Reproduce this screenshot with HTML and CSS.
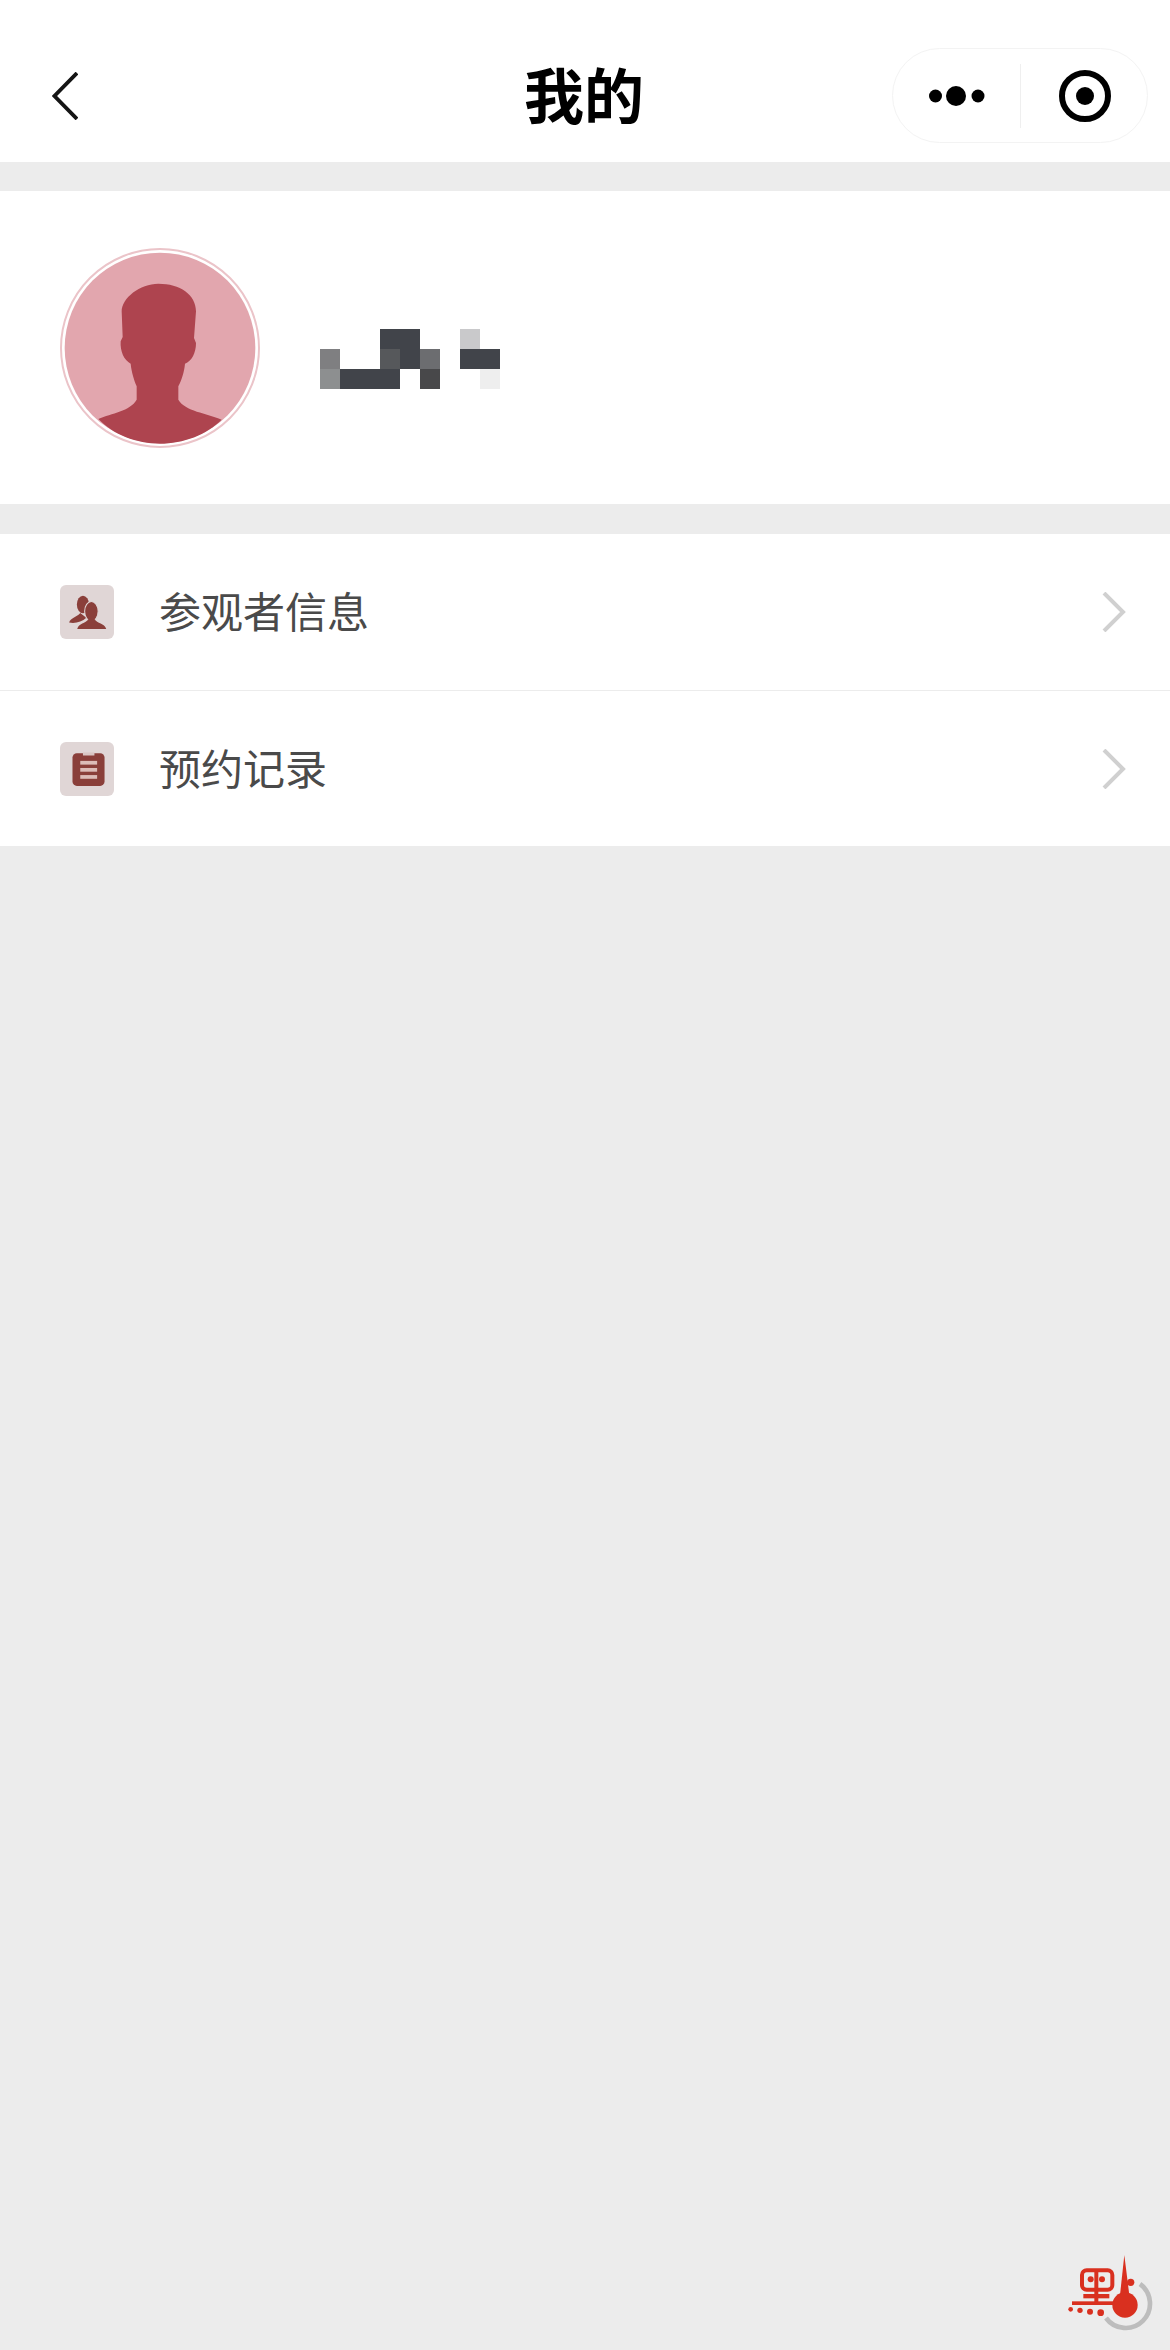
FILE: index.html
```html
<!DOCTYPE html>
<html lang="zh-CN">
<head>
<meta charset="utf-8">
<title>我的</title>
<link rel="stylesheet" href="styles.css">
</head>
<body>
<main class="page">
  <header class="navbar">
    <button class="back" aria-label="返回">
      <svg class="back-icon" viewBox="0 0 26 48"><path d="M25 1 2.5 24 25 47" fill="none" stroke="#151515" stroke-width="3.8"/></svg>
    </button>
    <h1 class="title">我的</h1>
    <div class="capsule">
      <svg class="capsule-more" viewBox="0 0 56 20"><circle cx="6.5" cy="10" r="6.5"/><circle cx="27" cy="10" r="10"/><circle cx="49" cy="10" r="6.5"/></svg>
      <span class="capsule-line"></span>
      <svg class="capsule-target" viewBox="0 0 52 52"><circle cx="26" cy="26" r="23" fill="none" stroke="#000" stroke-width="6"/><circle cx="26" cy="26" r="9"/></svg>
    </div>
  </header>

  <section class="profile">
    <svg class="avatar" viewBox="60 55 600 600">
      <circle cx="360" cy="355" r="297" fill="#fff" stroke="#ebc4c9" stroke-width="6"/>
      <circle cx="360" cy="355" r="286" fill="#e2a6ae"/>
      <path fill="#ae444f" d="M175 568C215 550 270 545 290 510L290 470C282 450 275 430 272 402 252 392 240 365 242 335L248 322 245 245C245 205 300 162 355 162 420 162 468 195 468 245L462 325 468 340C468 370 455 395 435 402 432 430 425 450 415 470L415 510C435 545 500 550 545 570 500 615 430 642 360 642 290 642 220 615 175 568Z"/>
    </svg>
    <div class="mosaic" aria-hidden="true">
      <i></i><i></i><i></i><i class="c-d"></i><i class="c-d"></i><i></i><i></i><i class="c-l"></i><i></i>
      <i class="c-g1"></i><i></i><i></i><i class="c-g2"></i><i class="c-d"></i><i class="c-g3"></i><i></i><i class="c-d"></i><i class="c-d"></i>
      <i class="c-g4"></i><i class="c-d"></i><i class="c-d"></i><i class="c-d"></i><i></i><i class="c-g5"></i><i></i><i></i><i class="c-x"></i>
    </div>
  </section>

  <nav class="menu">
    <a class="row">
      <span class="row-icon">
        <svg viewBox="60 75 160 160">
          <ellipse cx="128" cy="133" rx="18" ry="26" fill="#8a3f3a"/>
          <path fill="#8a3f3a" d="M87 186C92 172 110 170 120 158L138 172C125 184 105 190 87 186Z"/>
          <ellipse cx="153" cy="153" rx="20" ry="29" fill="#8a3f3a" stroke="#e0d6d6" stroke-width="3"/>
          <path fill="#8a3f3a" d="M111 205C116 188 135 190 145 176L162 176C170 190 192 188 197 205Z"/>
        </svg>
      </span>
      <span class="row-text">参观者信息</span>
      <svg class="chevron" viewBox="0 0 24 40"><path d="M2 1 21 20 2 39" fill="none" stroke="#d0d0d0" stroke-width="4"/></svg>
    </a>
    <a class="row">
      <span class="row-icon">
        <svg viewBox="60 547 160 160">
          <rect x="97" y="580" width="95" height="97" rx="13" fill="#8a3f3a"/>
          <rect x="128" y="578" width="34" height="9" fill="#d9c6c4"/>
          <rect x="120" y="603" width="50" height="11" fill="#dcbcb8"/>
          <rect x="120" y="624" width="50" height="11" fill="#dcbcb8"/>
          <rect x="120" y="645" width="50" height="11" fill="#dcbcb8"/>
        </svg>
      </span>
      <span class="row-text">预约记录</span>
      <svg class="chevron" viewBox="0 0 24 40"><path d="M2 1 21 20 2 39" fill="none" stroke="#d0d0d0" stroke-width="4"/></svg>
    </a>
  </nav>

  <svg class="logo" viewBox="0 0 390 360">
    <path d="M300 162A73 73 0 1 1 198 264" fill="none" stroke="#bdbdbd" stroke-width="14"/>
    <g fill="#d9301f">
      <circle cx="255" cy="225" r="38"/>
      <path d="M253 75 268 195 240 195Z"/>
      <circle cx="272" cy="157" r="11"/>
      <circle cx="92" cy="238" r="7"/>
      <circle cx="120" cy="241" r="8"/>
      <circle cx="150" cy="245" r="9"/>
      <circle cx="182" cy="248" r="10"/>
      <circle cx="152" cy="148" r="9"/>
      <circle cx="186" cy="148" r="9"/>
      <rect x="130" y="192" width="78" height="13"/>
      <rect x="96" y="214" width="128" height="11"/>
      <rect x="163" y="118" width="12" height="100"/>
    </g>
    <rect x="126" y="121" width="91" height="58" rx="14" fill="none" stroke="#d9301f" stroke-width="12"/>
  </svg>
</main>
</body>
</html>
```

FILE: styles.css
```css
* { box-sizing: border-box; }

html, body {
  margin: 0;
  padding: 0;
}

body {
  background: #ececec;
  font-family: "Noto Sans CJK SC", "Noto Sans", sans-serif;
}

.page {
  position: relative;
  min-height: 2350px;
  display: flex;
  flex-direction: column;
}

.navbar {
  height: 162px;
  padding: 48px 22px 19px 22px;
  background: #fff;
  display: grid;
  grid-template-columns: 1fr auto 1fr;
  align-items: center;
}

.back {
  width: 26px;
  height: 48px;
  margin-left: 30px;
  padding: 0;
  border: 0;
  background: none;
  display: block;
}

.back-icon {
  display: block;
  width: 26px;
  height: 48px;
}

.title {
  margin: -5px 2px 0 0;
  font-size: 60px;
  line-height: 64px;
  font-weight: 700;
  color: #000;
}

.capsule {
  justify-self: end;
  width: 256px;
  height: 95px;
  border: 1px solid #f3f3f3;
  border-radius: 48px;
  background: #fff;
  display: flex;
  align-items: center;
  padding-left: 36px;
}

.capsule-more {
  width: 56px;
  height: 20px;
  display: block;
}

.capsule-line {
  width: 1px;
  height: 64px;
  margin-left: 35px;
  background: #efefef;
}

.capsule-target {
  width: 52px;
  height: 52px;
  margin-left: 38px;
  display: block;
}

.profile {
  margin-top: 29px;
  height: 313px;
  padding-left: 60px;
  background: #fff;
  display: flex;
  align-items: center;
  gap: 60px;
}

.avatar {
  width: 200px;
  height: 200px;
  display: block;
}

.mosaic {
  margin-top: 23px;
  display: grid;
  grid-template-columns: repeat(9, 20px);
  grid-auto-rows: 20px;
}

.mosaic i { display: block; }
.c-d { background: #41444a; }
.c-l { background: #c9c9cb; }
.c-g1 { background: #7f7f81; }
.c-g2 { background: #56585b; }
.c-g3 { background: #6c6d70; }
.c-g4 { background: #8d8f90; }
.c-g5 { background: #48484a; }
.c-x { background: #eeeeee; }

.menu {
  margin-top: 30px;
  background: #fff;
  display: flex;
  flex-direction: column;
}

.row {
  height: 157px;
  padding: 0 44px 0 60px;
  display: flex;
  align-items: center;
  border-bottom: 1px solid #ececec;
}

.row:last-child {
  height: 155px;
  border-bottom: 0;
}

.row-icon {
  width: 54px;
  height: 54px;
  border-radius: 6px;
  background: #e0d6d6;
  flex: none;
}

.row-icon svg {
  display: block;
  width: 54px;
  height: 54px;
}

.row-text {
  margin: -4px 0 0 45px;
  flex: 1;
  font-size: 42px;
  line-height: 60px;
  color: #4a4a4a;
}

.chevron {
  width: 24px;
  height: 40px;
  display: block;
}

.logo {
  position: absolute;
  right: 0;
  bottom: 0;
  width: 130px;
  height: 120px;
}
```
